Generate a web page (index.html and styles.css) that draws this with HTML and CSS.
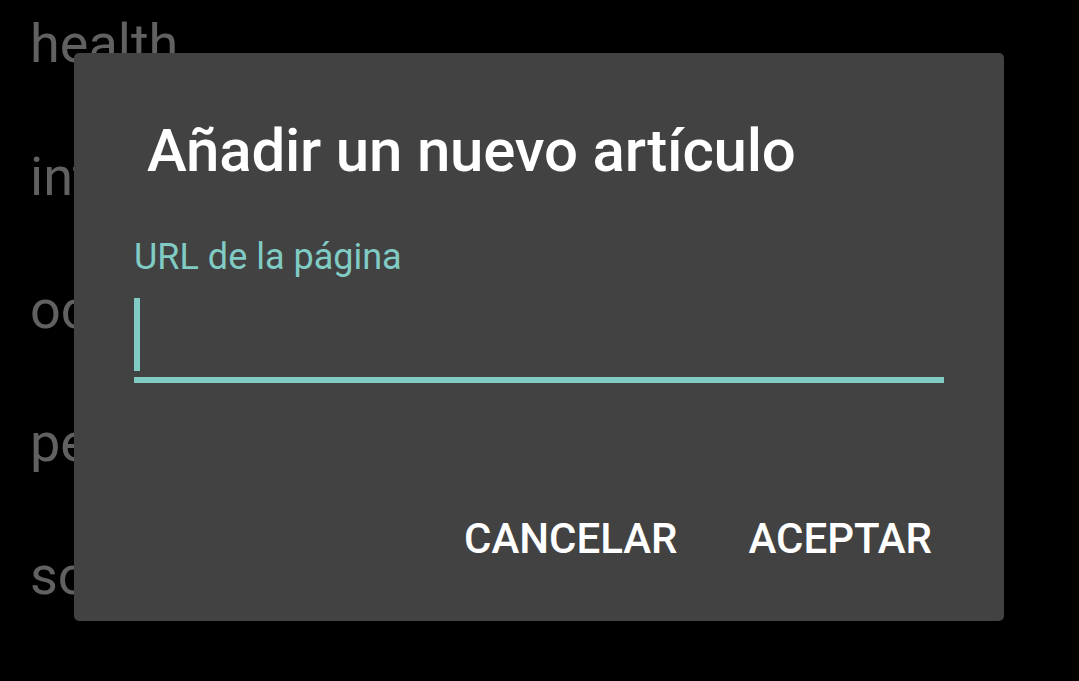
FILE: index.html
```html
<!DOCTYPE html>
<html lang="es">
<head>
<meta charset="utf-8">
<title>Añadir un nuevo artículo</title>
<link rel="stylesheet" href="styles.css">
</head>
<body>
<ul class="list">
  <li class="list-item">health</li>
  <li class="list-item">internet</li>
  <li class="list-item">ocio</li>
  <li class="list-item">personal</li>
  <li class="list-item">social</li>
</ul>
<div class="dialog">
  <h1 class="dialog-title">Añadir un nuevo artículo</h1>
  <div class="field">
    <label class="field-label">URL de la página</label>
    <div class="field-input">
      <span class="cursor"></span>
    </div>
    <div class="field-line"></div>
  </div>
  <div class="actions">
    <span class="btn">CANCELAR</span>
    <span class="btn">ACEPTAR</span>
  </div>
</div>
</body>
</html>
```
FILE: styles.css
```css
html, body {
  margin: 0;
  padding: 0;
  background: #000;
  width: 1079px;
  height: 681px;
  overflow: hidden;
  font-family: Roboto, "Noto Sans", sans-serif;
}

.list {
  list-style: none;
  margin: -23px 0 0 0;
  padding: 0 0 0 30px;
}

.list-item {
  font-size: 54px;
  line-height: 133px;
  color: #616161;
  white-space: nowrap;
}

.dialog {
  position: absolute;
  left: 74px;
  top: 53px;
  width: 930px;
  height: 568px;
  background: #424242;
  border-radius: 5px;
  display: flex;
  flex-direction: column;
  box-sizing: border-box;
}

.dialog-title {
  margin: 0;
  padding: 63px 0 0 73px;
  font-size: 60px;
  line-height: 70px;
  font-weight: 500;
  letter-spacing: -0.2px;
  color: #fff;
}

.field {
  display: flex;
  flex-direction: column;
  padding: 50px 60px 0 60px;
}

.field-label {
  font-size: 36px;
  line-height: 42px;
  color: #80cbc4;
}

.field-input {
  display: flex;
  padding-top: 20px;
  height: 73px;
}

.cursor {
  display: block;
  width: 6px;
  height: 73px;
  background: #80cbc4;
}

.field-line {
  margin-top: 6px;
  height: 6px;
  background: #80cbc4;
}

.actions {
  margin-top: auto;
  display: flex;
  justify-content: flex-end;
  gap: 71px;
  padding: 0 72px 58px 0;
}

.btn {
  font-size: 42px;
  line-height: 49px;
  font-weight: 500;
  color: #fff;
}
```
